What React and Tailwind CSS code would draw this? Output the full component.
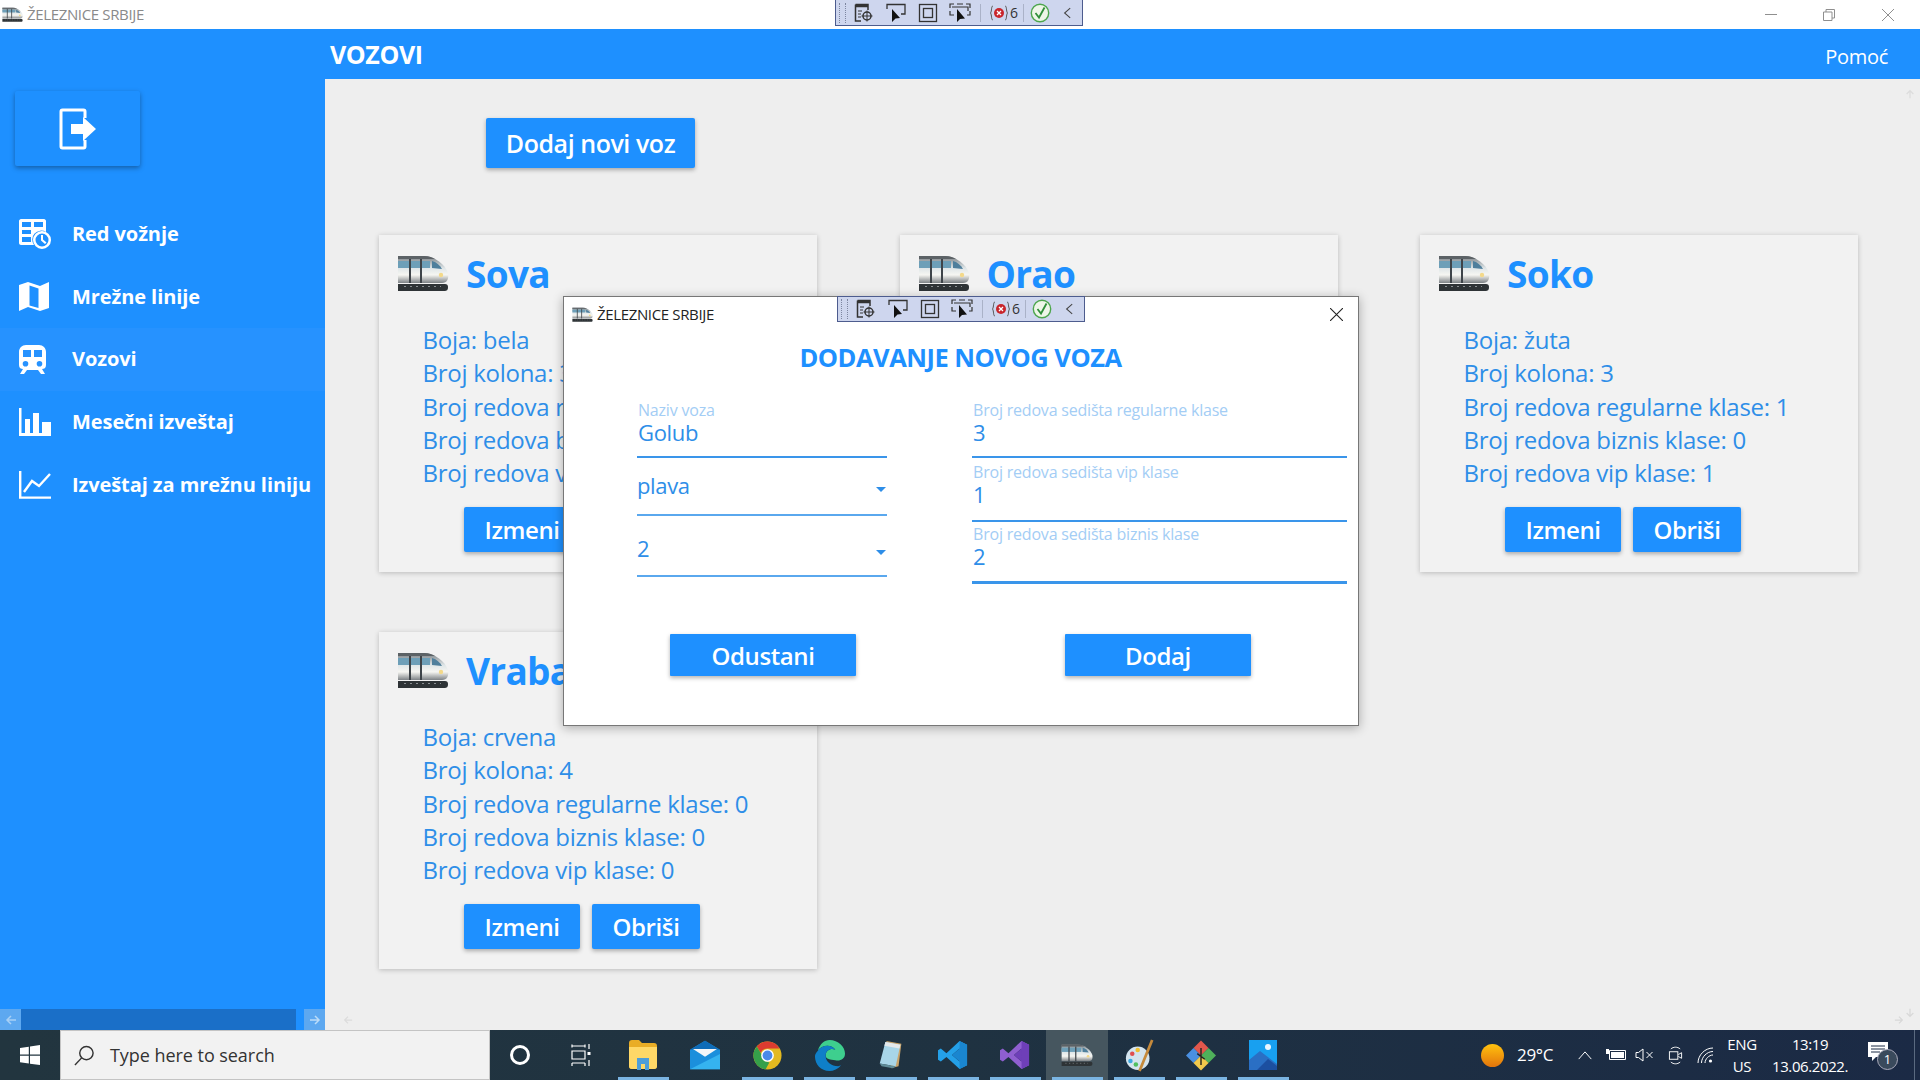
import { useId } from "react";

const trains = [
  { name: "Sova", color: "bela", cols: 3, reg: 1, biz: 0, vip: 1 },
  { name: "Orao", color: "siva", cols: 3, reg: 1, biz: 1, vip: 0 },
  { name: "Soko", color: "žuta", cols: 3, reg: 1, biz: 0, vip: 1 },
  { name: "Vrabac", color: "crvena", cols: 4, reg: 0, biz: 0, vip: 0 },
];

function TrainIcon({ className }) {
  const id = useId();
  return (
    <svg viewBox="0 0 52 36" className={className}>
      <defs>
        <linearGradient id={id} x1="0" y1="0" x2="0" y2="1">
          <stop offset="0" stopColor="#777d82" />
          <stop offset="0.45" stopColor="#dfe6e8" />
          <stop offset="0.7" stopColor="#f6f6f2" />
          <stop offset="1" stopColor="#7d8286" />
        </linearGradient>
      </defs>
      <path d="M1 1 H27 C37 1 48 9 51 18 C52 24 50 28 45 28 H1 Z" fill={`url(#${id})`} />
      <path d="M1 1 H27 C31 1 35 2 38 4 H1 Z" fill="#5c6266" />
      <path d="M1 6 H33 V13 H1 Z" fill="#6d9fb8" />
      <path d="M35 6 C39 7 43 10 45 14 L35 13 Z" fill="#4f7f9c" />
      <path d="M12 4 H14 V28 H12 Z M23 4 H25 V28 H23 Z" fill="#3e4449" />
      <circle cx="44" cy="20" r="2.2" fill="#f3d98a" />
      <path d="M1 29 H48 C50 29 51 30 51 32 C51 35 50 36 47 36 H1 Z" fill="#2e3336" />
      <path d="M7 31.5 H44" stroke="#8a8f92" strokeWidth="1" strokeDasharray="2 4" />
    </svg>
  );
}

function ScheduleIcon() {
  return (
    <svg viewBox="0 0 32 30" className="w-[32px] h-[30px]" fill="#fff">
      <path fillRule="evenodd" d="M2 0 H25 C26 0 27 1 27 2 V13 A9 9 0 0 0 15 26 H2 C1 26 0 25 0 24 V2 C0 1 1 0 2 0 Z M3 3 V8 H12 V3 Z M15 3 V8 H24 V3 Z M3 11 V15 H12 V11 Z M3 18 V23 H12 V18 Z" />
      <path fillRule="evenodd" d="M23 12 A9 9 0 1 1 23 30 A9 9 0 1 1 23 12 Z M23 14.5 A6.5 6.5 0 1 0 23 27.5 A6.5 6.5 0 1 0 23 14.5 Z" />
      <path d="M22 16 H24 V20.5 L27.5 23.5 L26 25 L22 21.5 Z" />
    </svg>
  );
}

function MapIcon() {
  return (
    <svg viewBox="0 0 30 29" className="w-[30px] h-[29px]" fill="#fff">
      <path d="M0 3 L9 0 L21 4 L30 0 V26 L21 29 L9 25 L0 29 Z M10.5 3.5 V23.5 L19.5 26 V6.5 Z" fillRule="evenodd" />
    </svg>
  );
}

function TrainNavIcon() {
  return (
    <svg viewBox="0 0 27 29" className="w-[27px] h-[29px]" fill="#fff">
      <path fillRule="evenodd" d="M7 0 H20 C24 0 27 3 27 7 V20 C27 23 25 24 23 24 L26 29 H22 L19 25 H8 L5 29 H1 L4 24 C2 24 0 23 0 20 V7 C0 3 3 0 7 0 Z M4 5 V12 H12 V5 Z M15 5 V12 H23 V5 Z M6.5 16 A2.8 2.8 0 1 0 6.5 21.6 A2.8 2.8 0 1 0 6.5 16 Z M20.5 16 A2.8 2.8 0 1 0 20.5 21.6 A2.8 2.8 0 1 0 20.5 16 Z" />
    </svg>
  );
}

function BarsIcon() {
  return (
    <svg viewBox="0 0 32 28" className="w-[32px] h-[28px]" fill="#fff">
      <path d="M0 0 H2.5 V25 H6 V11 H11 V25 H14 V5 H20 V25 H23 V14 H32 V28 H0 Z" />
    </svg>
  );
}

function LineIcon() {
  return (
    <svg viewBox="0 0 32 28" className="w-[32px] h-[28px]" fill="none" stroke="#fff" strokeWidth="2.4">
      <path d="M1.2 0 V26.6 H32" />
      <path d="M5 21 L13 10 L20 15 L31 3" />
    </svg>
  );
}

function LogoutIcon() {
  return (
    <svg viewBox="0 0 37 42" className="w-[37px] h-[42px]" fill="none">
      <path d="M26 10 V3.5 C26 2.5 25.5 2 24.5 2 H3.5 C2.5 2 2 2.5 2 3.5 V38.5 C2 39.5 2.5 40 3.5 40 H24.5 C25.5 40 26 39.5 26 38.5 V32" stroke="#fff" strokeWidth="3" />
      <path d="M12 16 H24 V9 L37 21 L24 33 V26 H12 Z" fill="#fff" />
    </svg>
  );
}

function Toolbar({ className }) {
  return (
    <div className={`absolute flex items-center h-[26px] w-[248px] bg-[#ced6ee] border border-[#4d5c8e] ${className}`}>
      <div className="ml-[3px] w-[7px] h-[20px] border-x border-dotted border-[#7d86a0]" />
      <svg viewBox="0 0 20 20" className="w-[20px] h-[20px] ml-[8px]" fill="none" stroke="#333">
        <path d="M1.5 1.5 H14 V7 M1.5 1.5 V18 H7" strokeWidth="1.5" />
        <path d="M2 3 H14" strokeWidth="2.5" />
        <path d="M4 8 H8 M4 11 H7 M4 14 H7" />
        <circle cx="13" cy="13" r="4" strokeWidth="1.5" />
        <path d="M13 7.5 V18.5 M7.5 13 H18.5" />
      </svg>
      <svg viewBox="0 0 20 20" className="w-[20px] h-[20px] ml-[12px]" fill="none" stroke="#333">
        <path d="M1 6 V1.5 H19 V11 H15" strokeWidth="1.3" />
        <path d="M6 6 L6 19 L9.5 15.5 L14 15 Z" fill="#111" stroke="none" />
      </svg>
      <svg viewBox="0 0 20 20" className="w-[20px] h-[20px] ml-[12px]" fill="none" stroke="#333" strokeWidth="1.3">
        <rect x="1.5" y="1.5" width="17" height="17" />
        <rect x="5.5" y="5.5" width="9" height="9" />
      </svg>
      <svg viewBox="0 0 22 20" className="w-[22px] h-[20px] ml-[11px]" fill="none" stroke="#333" strokeWidth="1.2">
        <path d="M1 5 V1 H5 M8 1 H14 M17 1 H21 V5 M21 8 V12 H18 M1 8 V12 H5 M3 4 H19 V8" />
        <path d="M8 6 L8 19 L11 16 L16 15.5 Z" fill="#111" stroke="none" />
      </svg>
      <div className="w-px h-[18px] bg-[#aab2c8] ml-[9px]" />
      <svg viewBox="0 0 18 16" className="w-[18px] h-[16px] ml-[9px]">
        <circle cx="9" cy="8" r="5" fill="#c9252b" />
        <path d="M7 6 L11 10 M11 6 L7 10" stroke="#fff" strokeWidth="1.3" />
        <path d="M3 1 C1 1 2 6 0.5 8 C2 10 1 15 3 15 M15 1 C17 1 16 6 17.5 8 C16 10 17 15 15 15" stroke="#555" fill="none" />
      </svg>
      <span className="ml-[2px] text-[14px] text-[#333] leading-none">6</span>
      <div className="w-px h-[18px] bg-[#aab2c8] ml-[5px]" />
      <svg viewBox="0 0 20 20" className="w-[20px] h-[20px] ml-[6px]" fill="none">
        <circle cx="10" cy="10" r="8.7" fill="#eef6e8" stroke="#4da64d" strokeWidth="1.4" />
        <path d="M5.5 10 L9 14.5 L14.5 4.5" stroke="#2f8f3a" strokeWidth="1.8" />
      </svg>
      <svg viewBox="0 0 10 14" className="w-[8px] h-[12px] ml-[13px]" fill="none" stroke="#444" strokeWidth="1.3">
        <path d="M9 1 L2 7 L9 13" />
      </svg>
    </div>
  );
}

function Scroll({ dir, className }) {
  return (
    <svg viewBox="0 0 12 12" className={className} fill="none" stroke="currentColor" strokeWidth="1.5">
      {dir === "left" && <path d="M11 6 H2 M6 2 L2 6 L6 10" />}
      {dir === "right" && <path d="M1 6 H10 M6 2 L10 6 L6 10" />}
      {dir === "up" && <path d="M6 11 V2 M2 6 L6 2 L10 6" />}
      {dir === "down" && <path d="M6 1 V10 M2 6 L6 10 L10 6" />}
    </svg>
  );
}

function TrainCard({ t }) {
  return (
    <div className="h-[337px] bg-[#f2f2f2] shadow-[0_1px_5px_rgba(0,0,0,0.22)] pt-[18px] pl-[18px]">
      <div className="flex items-center h-[48px]">
        <TrainIcon className="w-[52px] h-[36px] -mt-[9px]" />
        <div className="ml-[17px] -mt-[7px] text-[37px] font-bold text-[#1e90ff] tracking-[-0.7px] leading-none">{t.name}</div>
      </div>
      <div className="ml-[25.5px] mt-[22px] text-[24px] leading-[33.25px] text-[#2e8ee8] tracking-[-0.27px] whitespace-nowrap">
        <div>Boja: {t.color}</div>
        <div>Broj kolona: {t.cols}</div>
        <div>Broj redova regularne klase: {t.reg}</div>
        <div>Broj redova biznis klase: {t.biz}</div>
        <div>Broj redova vip klase: {t.vip}</div>
      </div>
      <div className="flex gap-[12px] ml-[67px] mt-[18px]">
        <button className="w-[116px] h-[45px] bg-[#1e90ff] text-white text-[24px] font-semibold tracking-[-0.4px] rounded-[2px] shadow-[0_2px_4px_rgba(0,0,0,0.3)]">Izmeni</button>
        <button className="w-[108px] h-[45px] bg-[#1e90ff] text-white text-[24px] font-semibold tracking-[-0.4px] rounded-[2px] shadow-[0_2px_4px_rgba(0,0,0,0.3)]">Obriši</button>
      </div>
    </div>
  );
}

function Field({ label, value, h, pt, thick }) {
  return (
    <div className={`${h} ${pt} relative pl-px ${thick ? "border-b-[3px]" : "border-b-2"} border-[#3a95ea]`}>
      <div className="text-[16px] leading-[20px] text-[#a3cdf5] tracking-[-0.2px] whitespace-nowrap">{label}</div>
      <div className="text-[22px] leading-[24px] text-[#2e8ee8] tracking-[-0.35px]">{value}</div>
    </div>
  );
}

function SelectField({ value, h, pt }) {
  return (
    <div className={`${h} ${pt} relative flex items-start justify-between border-b-2 border-[#5aa8ee]`}>
      <div className="text-[22px] leading-[30px] text-[#2e8ee8] tracking-[-0.35px]">{value}</div>
      <div className="mt-[17px] mr-[1px] w-0 h-0 border-x-[5px] border-x-transparent border-t-[5px] border-t-[#2e8ee8]" />
    </div>
  );
}

const navItems = [
  { label: "Red vožnje", icon: <ScheduleIcon /> },
  { label: "Mrežne linije", icon: <MapIcon /> },
  { label: "Vozovi", icon: <TrainNavIcon />, active: true },
  { label: "Mesečni izveštaj", icon: <BarsIcon /> },
  { label: "Izveštaj za mrežnu liniju", icon: <LineIcon /> },
];

function TaskIcon({ children, on, active, w = "w-[62px]" }) {
  return (
    <div className={`${w} h-full relative flex items-center justify-center ${active ? "bg-[#46565f]" : ""}`}>
      {children}
      {on && <div className="absolute bottom-0 left-[6px] right-[5px] h-[3px] bg-[#7ab4e2]" />}
    </div>
  );
}

export default function App() {
  return (
    <div className="relative w-[1920px] h-[1080px] overflow-hidden flex flex-col bg-white font-['Open_Sans',sans-serif]">
      {/* title bar */}
      <div className="h-[29px] flex items-center bg-white shrink-0">
        <TrainIcon className="w-[21px] h-[15px] ml-[2px]" />
        <span className="ml-[4px] text-[15px] text-[#8a8a8a] tracking-[-0.35px]">ŽELEZNICE SRBIJE</span>
        <div className="ml-auto flex items-center">
          <div className="w-[12px] h-px bg-[#8f8f8f] mr-[46px]" />
          <svg viewBox="0 0 12 12" className="w-[12px] h-[12px] mr-[47px]" fill="none" stroke="#8f8f8f">
            <path d="M0.5 3 H9 V11.5 H0.5 Z M3 3 V0.5 H11.5 V9 H9" />
          </svg>
          <svg viewBox="0 0 12 12" className="w-[12px] h-[12px] mr-[26px]" fill="none" stroke="#8f8f8f">
            <path d="M0 0 L12 12 M12 0 L0 12" />
          </svg>
        </div>
      </div>
      <Toolbar className="left-[835px] top-0 border-t-0" />

      <div className="flex flex-1 min-h-0">
        {/* sidebar */}
        <aside className="w-[325px] shrink-0 bg-[#1e90ff] flex flex-col">
          <div className="pl-[15px] pt-[62px]">
            <button className="w-[125px] h-[75px] flex items-center justify-center bg-[#1e90ff] rounded-[2px] shadow-[0_2px_5px_rgba(0,0,0,0.35)]">
              <LogoutIcon />
            </button>
          </div>
          <nav className="mt-[37px]">
            {navItems.map((n) => (
              <div key={n.label} className={`h-[62.6px] flex items-center ${n.active ? "bg-[#2692ff]" : ""}`}>
                <div className="w-[72px] pl-[19px] flex items-center">{n.icon}</div>
                <span className="text-[20px] font-bold text-white tracking-[-0.08px] whitespace-nowrap">{n.label}</span>
              </div>
            ))}
          </nav>
          <div className="mt-auto h-[21px] flex items-stretch">
            <div className="w-[21px] bg-[#5da8f0] flex items-center justify-center text-[#a8d0f5]"><Scroll dir="left" className="w-[12px] h-[12px]" /></div>
            <div className="flex-1 bg-[#1a6fc8]" />
            <div className="w-[8px]" />
            <div className="w-[21px] bg-[#5da8f0] flex items-center justify-center text-[#bcdcf8]"><Scroll dir="right" className="w-[12px] h-[12px]" /></div>
          </div>
        </aside>

        {/* main */}
        <main className="flex-1 min-w-0 flex flex-col">
          <header className="h-[50px] shrink-0 bg-[#1e90ff] flex items-center pl-[5px] pr-[32px] justify-between">
            <h1 className="text-[25px] font-bold text-white tracking-[-0.4px] mt-[2px]">VOZOVI</h1>
            <span className="text-[20px] text-white tracking-[-0.3px] mt-[6px]">Pomoć</span>
          </header>
          <div className="flex-1 relative bg-[#eeeeee] pl-[54px] pt-[39px]">
            <button className="ml-[107px] w-[209px] h-[50px] pt-[2px] bg-[#1e90ff] text-white text-[25px] font-semibold tracking-[-0.45px] rounded-[2px] shadow-[0_2px_4px_rgba(0,0,0,0.3)]">Dodaj novi voz</button>
            <div className="mt-[67px] grid grid-cols-[438px_438px_438px] gap-x-[82.5px] gap-y-[60px]">
              {trains.map((t) => (
                <TrainCard key={t.name} t={t} />
              ))}
            </div>
            <Scroll dir="up" className="absolute right-[5px] top-[10px] w-[10px] h-[10px] text-[#dcdcdc]" />
            <Scroll dir="down" className="absolute right-[5px] bottom-[12px] w-[10px] h-[10px] text-[#d8d8d8]" />
            <Scroll dir="left" className="absolute left-[18px] bottom-[5px] w-[10px] h-[10px] text-[#dcdcdc]" />
            <Scroll dir="right" className="absolute right-[16px] bottom-[5px] w-[10px] h-[10px] text-[#d8d8d8]" />
          </div>
        </main>
      </div>

      {/* taskbar */}
      <div className="h-[50px] shrink-0 flex items-stretch bg-gradient-to-r from-[#22353f] via-[#1f3241] to-[#1b2a45]">
        <div className="w-[60px] flex items-center justify-center">
          <svg viewBox="0 0 20 20" className="w-[20px] h-[20px]" fill="#fff">
            <path d="M0 3 L8.8 1.7 V9.5 H0 Z M10 1.5 L20 0 V9.5 H10 Z M0 10.7 H8.8 V18.5 L0 17.2 Z M10 10.7 H20 V20 L10 18.7 Z" />
          </svg>
        </div>
        <div className="w-[430px] bg-[#f2f2f2] border border-[#c4c4c4] flex items-center">
          <svg viewBox="0 0 22 22" className="w-[21px] h-[21px] ml-[13px]" fill="none" stroke="#333" strokeWidth="1.5">
            <circle cx="13" cy="8.5" r="7" />
            <path d="M8 13.5 L1 21" />
          </svg>
          <span className="ml-[15px] text-[18px] text-[#333] tracking-[-0.05px]">Type here to search</span>
        </div>
        <div className="flex items-stretch">
          <TaskIcon w="w-[59px]">
            <div className="w-[20px] h-[20px] rounded-full border-[3px] border-white" />
          </TaskIcon>
          <TaskIcon w="w-[63px]">
            <svg viewBox="0 0 20 22" className="w-[20px] h-[22px]" fill="none" stroke="#fff" strokeWidth="1.2">
              <path d="M1 2 H14 M1 0.5 V3.5 M14 0.5 V3.5 M1 7 H14 V15 H1 Z M1 19 H14 M1 19 V22 M14 19 V22" />
              <path d="M18 0 V5 M18 16 V22" />
              <path d="M16.5 8 H19.5 V11 H16.5 Z" fill="#fff" stroke="none" />
            </svg>
          </TaskIcon>
          <TaskIcon on>
            <svg viewBox="0 0 28 30" className="w-[28px] h-[30px]">
              <path d="M0 3 C0 1 1 0 3 0 H10 L13 3 H25 C27 3 28 4 28 6 V26 C28 28 27 29 25 29 H3 C1 29 0 28 0 26 Z" fill="#e9ad26" />
              <path d="M0 7 H28 V26 C28 28 27 29 25 29 H3 C1 29 0 28 0 26 Z" fill="#ffd867" />
              <path d="M8 30 V18 H20 V30 H16 V24 H12 V30 Z" fill="#4e9ed8" />
            </svg>
          </TaskIcon>
          <TaskIcon>
            <svg viewBox="0 0 30 43" className="w-[30px] h-[30px]" preserveAspectRatio="none">
              <path d="M15 1 L30 14 V42 H0 V14 Z" fill="#1b8fdc" />
              <path d="M15 1 L30 14 H0 Z" fill="#0f6cb8" />
              <path d="M3 13 H27 L15 24 Z" fill="#f4f6f8" />
              <path d="M0 42 L30 20 V42 Z" fill="#35b3f0" />
            </svg>
          </TaskIcon>
          <TaskIcon on>
            <svg viewBox="0 0 32 32" className="w-[29px] h-[29px]">
              <circle cx="16" cy="16" r="15.5" fill="#e3b91f" />
              <path d="M16 .5 A15.5 15.5 0 0 1 29.4 8.2 H16 A8 8 0 0 0 8.5 13 L4.2 6 A15.5 15.5 0 0 1 16 .5 Z" fill="#dc3c30" />
              <path d="M4.2 6 L11 17.5 A8 8 0 0 0 18 23.7 L14 31.3 A15.5 15.5 0 0 1 4.2 6 Z" fill="#35a04a" />
              <circle cx="16" cy="16" r="7" fill="#fff" />
              <circle cx="16" cy="16" r="5.4" fill="#4a89e8" />
            </svg>
          </TaskIcon>
          <TaskIcon on>
            <svg viewBox="0 0 32 32" className="w-[31px] h-[31px]">
              <path d="M16 0 C25 0 32 7 32 14 C32 20 27 22 22 21 C17 20 12 20 12 16 C12 10 18 8 22 10 C18 4 8 5 4 11 C6 4 11 0 16 0 Z" fill="#3ecf8e" />
              <path d="M4 11 C8 5 18 4 22 10 C18 8 12 10 12 16 C12 23 18 27 25 27 L28 26 C25 30 20 32 16 32 C7 32 1 25 1 17 C1 15 2 13 4 11 Z" fill="#0f7fc8" />
            </svg>
          </TaskIcon>
          <TaskIcon on>
            <svg viewBox="0 0 26 32" className="w-[26px] h-[30px]">
              <path d="M8 1 L24 4 L21 28 L13 30 Z" fill="#c9a36a" />
              <path d="M7 2 L23 5 L18 28 L1 25 Z" fill="#a8d5e8" />
              <path d="M7 2 L23 5 L22 9 L6 6 Z" fill="#e4e8ea" />
              <path d="M1 25 L18 28 L15 30 L3 28 Z" fill="#5f8c99" />
            </svg>
          </TaskIcon>
          <TaskIcon on>
            <svg viewBox="0 0 32 32" className="w-[30px] h-[32px]">
              <path d="M23 1 L31 5 V27 L23 31 L9 18 L3 23 L0 21 V11 L3 9 L9 14 Z M23 9 L15 16 L23 23 Z" fill="#24a0e8" fillRule="evenodd" />
              <path d="M23 1 L31 5 V27 L23 31 Z M23 9 V23 L15 16 Z" fill="#1a86d0" fillRule="evenodd" />
            </svg>
          </TaskIcon>
          <TaskIcon on>
            <svg viewBox="0 0 32 32" className="w-[30px] h-[32px]">
              <path d="M23 1 L31 5 V27 L23 31 L9 18 L3 23 L0 21 V11 L3 9 L9 14 Z M23 9 L15 16 L23 23 Z" fill="#8f5fd0" fillRule="evenodd" />
              <path d="M23 1 L31 5 V27 L23 31 Z M23 9 V23 L15 16 Z" fill="#6e3fb8" fillRule="evenodd" />
            </svg>
          </TaskIcon>
          <TaskIcon on active>
            <TrainIcon className="w-[32px] h-[24px]" />
          </TaskIcon>
          <TaskIcon on>
            <svg viewBox="0 0 32 36" className="w-[29px] h-[33px]">
              <ellipse cx="14" cy="21" rx="13" ry="13" fill="#d4e4ee" />
              <circle cx="8" cy="16" r="2.5" fill="#e04f4f" />
              <circle cx="14" cy="12" r="2.5" fill="#f0c030" />
              <circle cx="6" cy="24" r="2.5" fill="#3fa9e0" />
              <circle cx="12" cy="28" r="2.5" fill="#4fc060" />
              <path d="M30 1 L16 35" stroke="#c58a3c" strokeWidth="3" />
            </svg>
          </TaskIcon>
          <TaskIcon on>
            <svg viewBox="0 0 32 32" className="w-[30px] h-[31px]">
              <path d="M16 0 L24 8 L16 16 L8 8 Z" fill="#e2574c" />
              <path d="M8 8 L16 16 L8 24 L0 16 Z" fill="#4a90e2" />
              <path d="M24 8 L32 16 L24 24 L16 16 Z" fill="#4fb05a" />
              <path d="M16 16 L24 24 L16 32 L8 24 Z" fill="#f2c94c" />
              <path d="M16 8 L16 26 M12 14 L20 20" stroke="#222" strokeWidth="1.5" />
            </svg>
          </TaskIcon>
          <TaskIcon on>
            <svg viewBox="0 0 28 30" className="w-[28px] h-[30px]">
              <rect width="28" height="30" fill="#18a0f0" />
              <circle cx="19" cy="7" r="3" fill="#e9f6ff" />
              <path d="M0 30 V20 L11 11 L28 24 V30 Z" fill="#2a6fc4" />
              <path d="M8 30 L19 19 L28 26 V30 Z" fill="#1c4fa0" />
            </svg>
          </TaskIcon>
        </div>
        <div className="flex-1 min-w-0 flex items-center justify-end text-white">
          <div className="w-[23px] h-[23px] rounded-full bg-gradient-to-b from-[#ffc20e] to-[#e2740c]" />
          <span className="ml-[13px] w-[39px] text-[17px] tracking-[-0.3px] whitespace-nowrap">29°C</span>
          <svg viewBox="0 0 16 10" className="ml-[21px] w-[16px] h-[9px]" fill="none" stroke="#fff" strokeWidth="1.1">
            <path d="M1 9 L8 1 L15 9" />
          </svg>
          <svg viewBox="0 0 20 14" className="ml-[13px] w-[20px] h-[14px]" fill="#fff">
            <path d="M3.5 2.5 H19.5 V11.5 H3.5 Z" fill="none" stroke="#fff" />
            <rect x="5" y="4" width="13" height="6" />
            <path d="M0 1 H3 V6 H0 Z" />
          </svg>
          <svg viewBox="0 0 20 14" className="ml-[9px] w-[20px] h-[14px]" fill="none" stroke="#fff">
            <path d="M1 4.5 H3.5 L8 1 V13 L3.5 9.5 H1 Z" />
            <path d="M11.5 4 L17.5 10 M17.5 4 L11.5 10" />
          </svg>
          <svg viewBox="0 0 16 20" className="ml-[13px] w-[15px] h-[19px]" fill="none" stroke="#fff">
            <path d="M3 3 C6 .5 10 .5 13 3 M3 17 C6 19.5 10 19.5 13 17" />
            <rect x="1.5" y="6" width="9" height="8" />
            <path d="M11 9 L14.5 7 V13 L11 11" />
          </svg>
          <svg viewBox="0 0 17 17" className="ml-[14px] w-[17px] h-[17px]" fill="none" stroke="#fff">
            <path d="M1 16 C1 8 8 1 16 1 M4.5 16 C4.5 10 10 4.5 16 4.5 M8 16 C8 12 12 8 16 8" />
            <circle cx="13.5" cy="14" r="1.6" fill="#fff" stroke="none" />
          </svg>
          <div className="ml-[7px] w-[42px] text-center text-[15px] leading-[22px] tracking-[-0.3px]">
            <div>ENG</div>
            <div>US</div>
          </div>
          <div className="ml-[9px] w-[76px] text-center text-[15px] leading-[22px] tracking-[-0.4px] whitespace-nowrap">
            <div>13:19</div>
            <div>13.06.2022.</div>
          </div>
          <div className="relative ml-[20px] mr-[16px] w-[30px] h-[30px]">
            <svg viewBox="0 0 20 20" className="w-[20px] h-[20px] absolute left-0 top-[2px]" fill="#fff">
              <path d="M0 0 H20 V15 H8 L4 19 V15 H0 Z" />
              <path d="M3 4 H17 M3 7 H17 M3 10 H12" stroke="#1b2a45" />
            </svg>
            <div className="absolute left-[9px] top-[9px] w-[21px] h-[21px] rounded-full bg-[#3a4a5c] border border-[#aab] flex items-center justify-center text-[13px] text-white leading-none">1</div>
          </div>
          <div className="w-px h-full bg-[#5a6a80]" />
          <div className="w-[5px]" />
        </div>
      </div>

      {/* dodavanje voza modal */}
      <div className="absolute left-[563px] top-[296px] w-[796px] h-[430px] bg-white border border-[#777] shadow-[0_2px_10px_rgba(0,0,0,0.3)] flex flex-col">
        <div className="flex items-center h-[35px] pl-[8px] pr-[15px] shrink-0">
          <TrainIcon className="w-[21px] h-[15px]" />
          <span className="ml-[4px] text-[15px] text-[#222] tracking-[-0.35px]">ŽELEZNICE SRBIJE</span>
          <svg viewBox="0 0 12 12" className="ml-auto w-[13px] h-[13px]" fill="none" stroke="#222" strokeWidth="1">
            <path d="M0 0 L12 12 M12 0 L0 12" />
          </svg>
        </div>
        <h2 className="text-center text-[25.5px] font-bold text-[#1e90ff] tracking-[-0.5px] leading-[32px] mt-[9px] -ml-[1px]">DODAVANJE NOVOG VOZA</h2>
        <div className="grid grid-cols-[250px_375px] gap-x-[85px] pl-[73px] mt-[26px]">
          <div>
            <Field label="Naziv voza" value="Golub" h="h-[59px]" pt="pt-[1px]" />
            <SelectField value="plava" h="h-[58px]" pt="pt-[12px]" />
            <SelectField value="2" h="h-[61px]" pt="pt-[17px]" />
          </div>
          <div>
            <Field label="Broj redova sedišta regularne klase" value="3" h="h-[59px]" pt="pt-[1px]" />
            <Field label="Broj redova sedišta vip klase" value="1" h="h-[64px]" pt="pt-[4px]" />
            <Field label="Broj redova sedišta biznis klase" value="2" h="h-[62px]" pt="pt-[2px]" thick />
          </div>
        </div>
        <div className="grid grid-cols-[186px_186px] gap-x-[209px] pl-[106px] mt-[50px]">
          <button className="h-[42px] pt-px bg-[#1e90ff] text-white text-[24px] font-semibold tracking-[-0.4px] rounded-[1px] shadow-[0_2px_4px_rgba(0,0,0,0.3)]">Odustani</button>
          <button className="h-[42px] pt-px bg-[#1e90ff] text-white text-[24px] font-semibold tracking-[-0.4px] rounded-[1px] shadow-[0_2px_4px_rgba(0,0,0,0.3)]">Dodaj</button>
        </div>
      </div>
      <Toolbar className="left-[837px] top-[296px]" />
    </div>
  );
}
